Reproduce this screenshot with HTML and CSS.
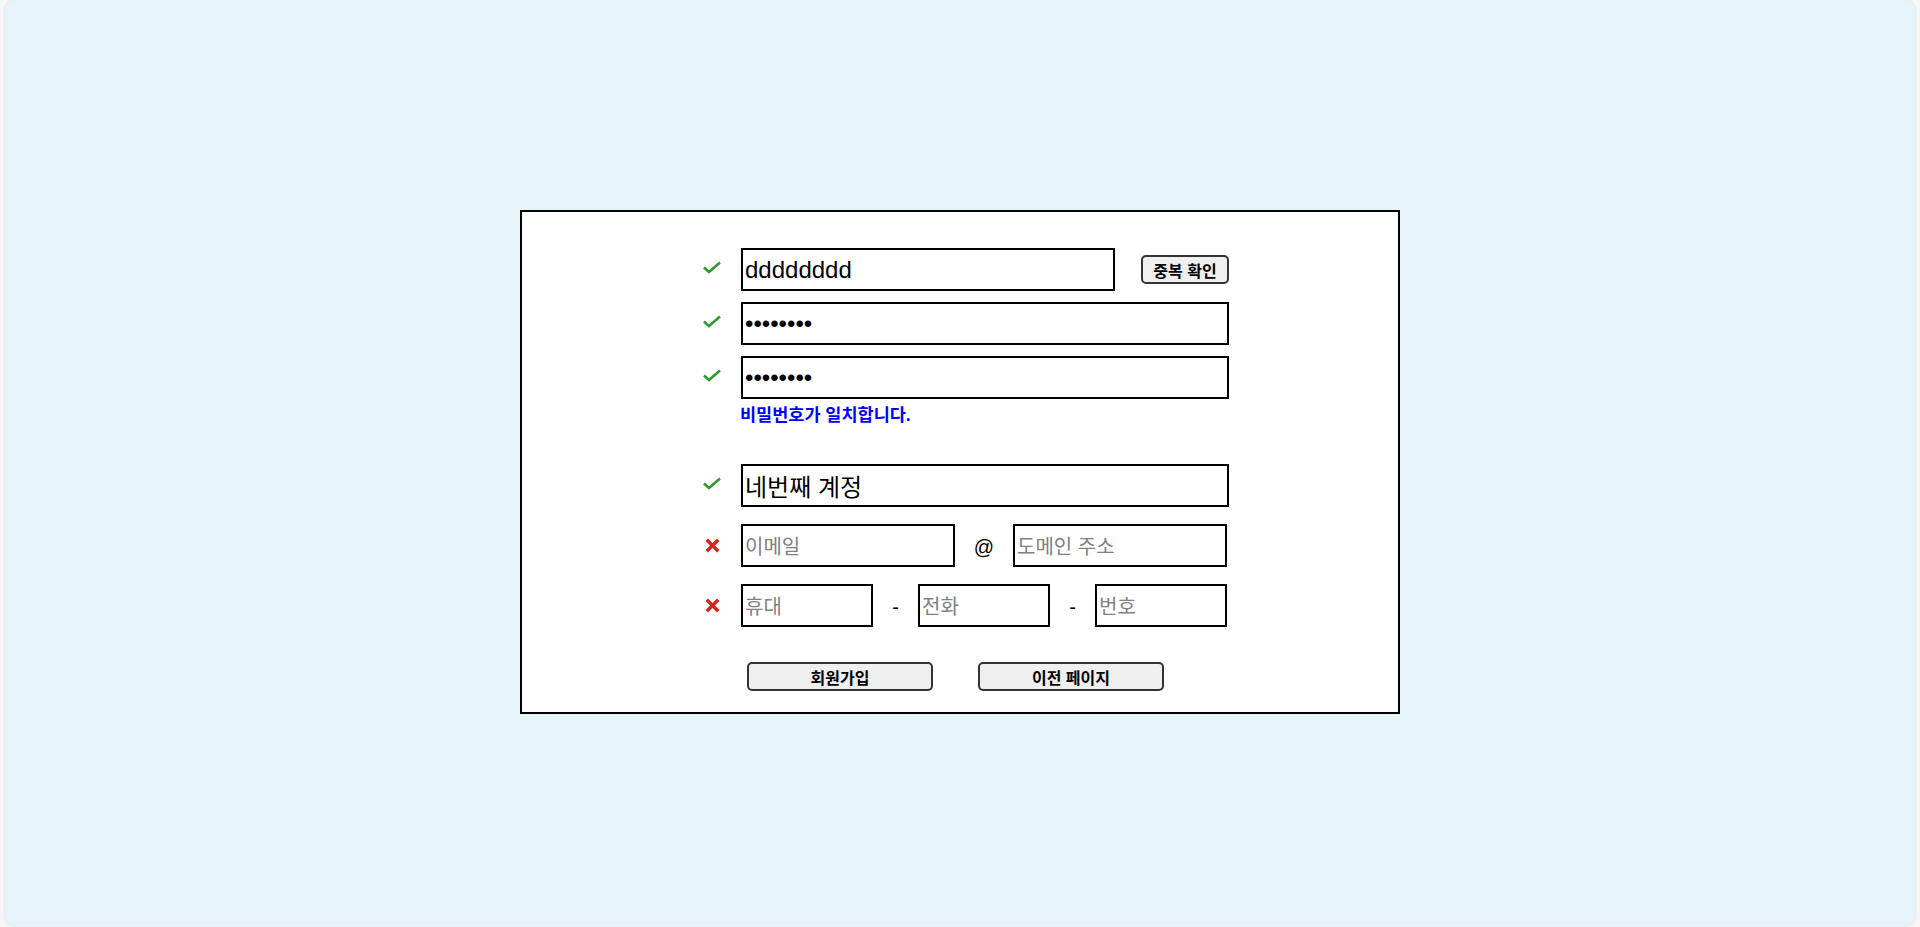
FILE: index.html
```html
<!DOCTYPE html>
<html lang="ko">

<head>
    <meta charset="UTF-8">
    <meta name="viewport" content="width=device-width, initial-scale=1.0">
    <title>회원가입</title>
    <link rel="stylesheet" href="styles.css">
</head>

<body>
    <div class="page">
        <form class="join-box" onsubmit="return false;">
            <div class="row">
                <span class="mark ok"><svg viewBox="0 0 18 13"><polyline points="1,6.5 6,11 17,1.5"/></svg></span>
                <div class="field">
                    <input type="text" class="big id-input" value="dddddddd">
                    <button type="button" class="small-btn">중복 확인</button>
                </div>
            </div>
            <div class="row">
                <span class="mark ok"><svg viewBox="0 0 18 13"><polyline points="1,6.5 6,11 17,1.5"/></svg></span>
                <div class="field">
                    <input type="password" class="big" value="12345678">
                </div>
            </div>
            <div class="row">
                <span class="mark ok"><svg viewBox="0 0 18 13"><polyline points="1,6.5 6,11 17,1.5"/></svg></span>
                <div class="field">
                    <input type="password" class="big" value="12345678">
                </div>
            </div>
            <div class="message">비밀번호가 일치합니다.</div>

            <div class="row name-row">
                <span class="mark ok"><svg viewBox="0 0 18 13"><polyline points="1,6.5 6,11 17,1.5"/></svg></span>
                <div class="field">
                    <input type="text" class="big" value="네번째 계정">
                </div>
            </div>
            <div class="row wide-gap">
                <span class="mark bad"><svg viewBox="0 0 13 13"><path d="M1.5 1.5 L11.5 11.5 M11.5 1.5 L1.5 11.5"/></svg></span>
                <div class="field">
                    <input type="text" class="mail" placeholder="이메일">
                    <span class="sep at">@</span>
                    <input type="text" class="mail" placeholder="도메인 주소">
                </div>
            </div>
            <div class="row wide-gap">
                <span class="mark bad"><svg viewBox="0 0 13 13"><path d="M1.5 1.5 L11.5 11.5 M11.5 1.5 L1.5 11.5"/></svg></span>
                <div class="field">
                    <input type="text" class="phone" placeholder="휴대">
                    <span class="sep">-</span>
                    <input type="text" class="phone" placeholder="전화">
                    <span class="sep">-</span>
                    <input type="text" class="phone" placeholder="번호">
                </div>
            </div>

            <div class="buttons">
                <button type="submit" class="wide-btn">회원가입</button>
                <button type="button" class="wide-btn">이전 페이지</button>
            </div>
        </form>
    </div>
</body>

</html>
```

FILE: styles.css
```css
body {
    font-family: "Liberation Sans", "Noto Sans CJK KR", sans-serif;
    margin: 0;
    background-color: #f6f6f6;
}

.page {
    margin: 0 5px 1px 5px;
    height: 926px;
    background-color: #e6f3f8;
    border-radius: 10px;
    box-shadow: 0 0 3px rgba(0, 0, 0, 0.12);
    display: flex;
    justify-content: center;
    align-items: center;
}

.join-box {
    border: 2px solid #000;
    background-color: #fff;
    padding: 36px 0 21px 181px;
    width: 695px;
    margin-top: -2px;
}

.row {
    display: flex;
    align-items: center;
    height: 43px;
    margin-bottom: 11px;
}

.row.name-row {
    margin-top: 37px;
    margin-bottom: 17px;
}

.row.wide-gap {
    margin-bottom: 17px;
}

.mark {
    width: 18px;
    margin-right: 20px;
    display: flex;
    justify-content: center;
    margin-top: -5px;
}

.mark svg {
    fill: none;
}

.mark.ok svg {
    width: 18px;
    height: 13px;
    stroke: #2e9b2e;
    stroke-width: 2.6;
}

.mark.bad svg {
    width: 15px;
    height: 15px;
    stroke: #e0201d;
    stroke-width: 3;
    margin-top: 4px;
}

.field {
    display: flex;
    align-items: center;
    width: 488px;
    height: 43px;
}

input {
    height: 43px;
    box-sizing: border-box;
    border: 2px solid #000;
    padding: 1px 2px;
    margin: 0;
    font-family: "Liberation Sans", "Noto Sans CJK KR", sans-serif;
    color: #000;
    outline: none;
}

input::placeholder {
    color: #808080;
}

.big {
    width: 488px;
    font-size: 24px;
}

.big.id-input {
    width: 374px;
}

.mail {
    width: 214px;
    font-size: 20px;
    padding-top: 4px;
}

.phone {
    width: 132px;
    font-size: 20px;
    padding-top: 4px;
}

.sep {
    text-align: center;
    font-size: 20px;
    width: 45px;
    padding-top: 4px;
}

.sep.at {
    width: 58px;
}

.small-btn {
    margin-left: 26px;
    width: 88px;
    height: 29px;
    font-family: "Liberation Sans", "Noto Sans CJK KR", sans-serif;
    font-size: 16px;
    font-weight: bold;
    background-color: #efefef;
    border: 2px solid #333;
    border-radius: 5px;
    padding: 0;
    cursor: pointer;
}

.message {
    color: #0000ff;
    font-weight: bold;
    font-size: 17.5px;
    line-height: 24px;
    height: 24px;
    margin-top: -7px;
    margin-left: 37px;
}

.buttons {
    display: flex;
    margin-top: 35px;
    margin-left: 44px;
    gap: 45px;
}

.wide-btn {
    width: 186px;
    height: 29px;
    font-family: "Liberation Sans", "Noto Sans CJK KR", sans-serif;
    font-size: 16px;
    font-weight: bold;
    background-color: #efefef;
    border: 2px solid #333;
    border-radius: 5px;
    padding: 0;
    cursor: pointer;
}
```
